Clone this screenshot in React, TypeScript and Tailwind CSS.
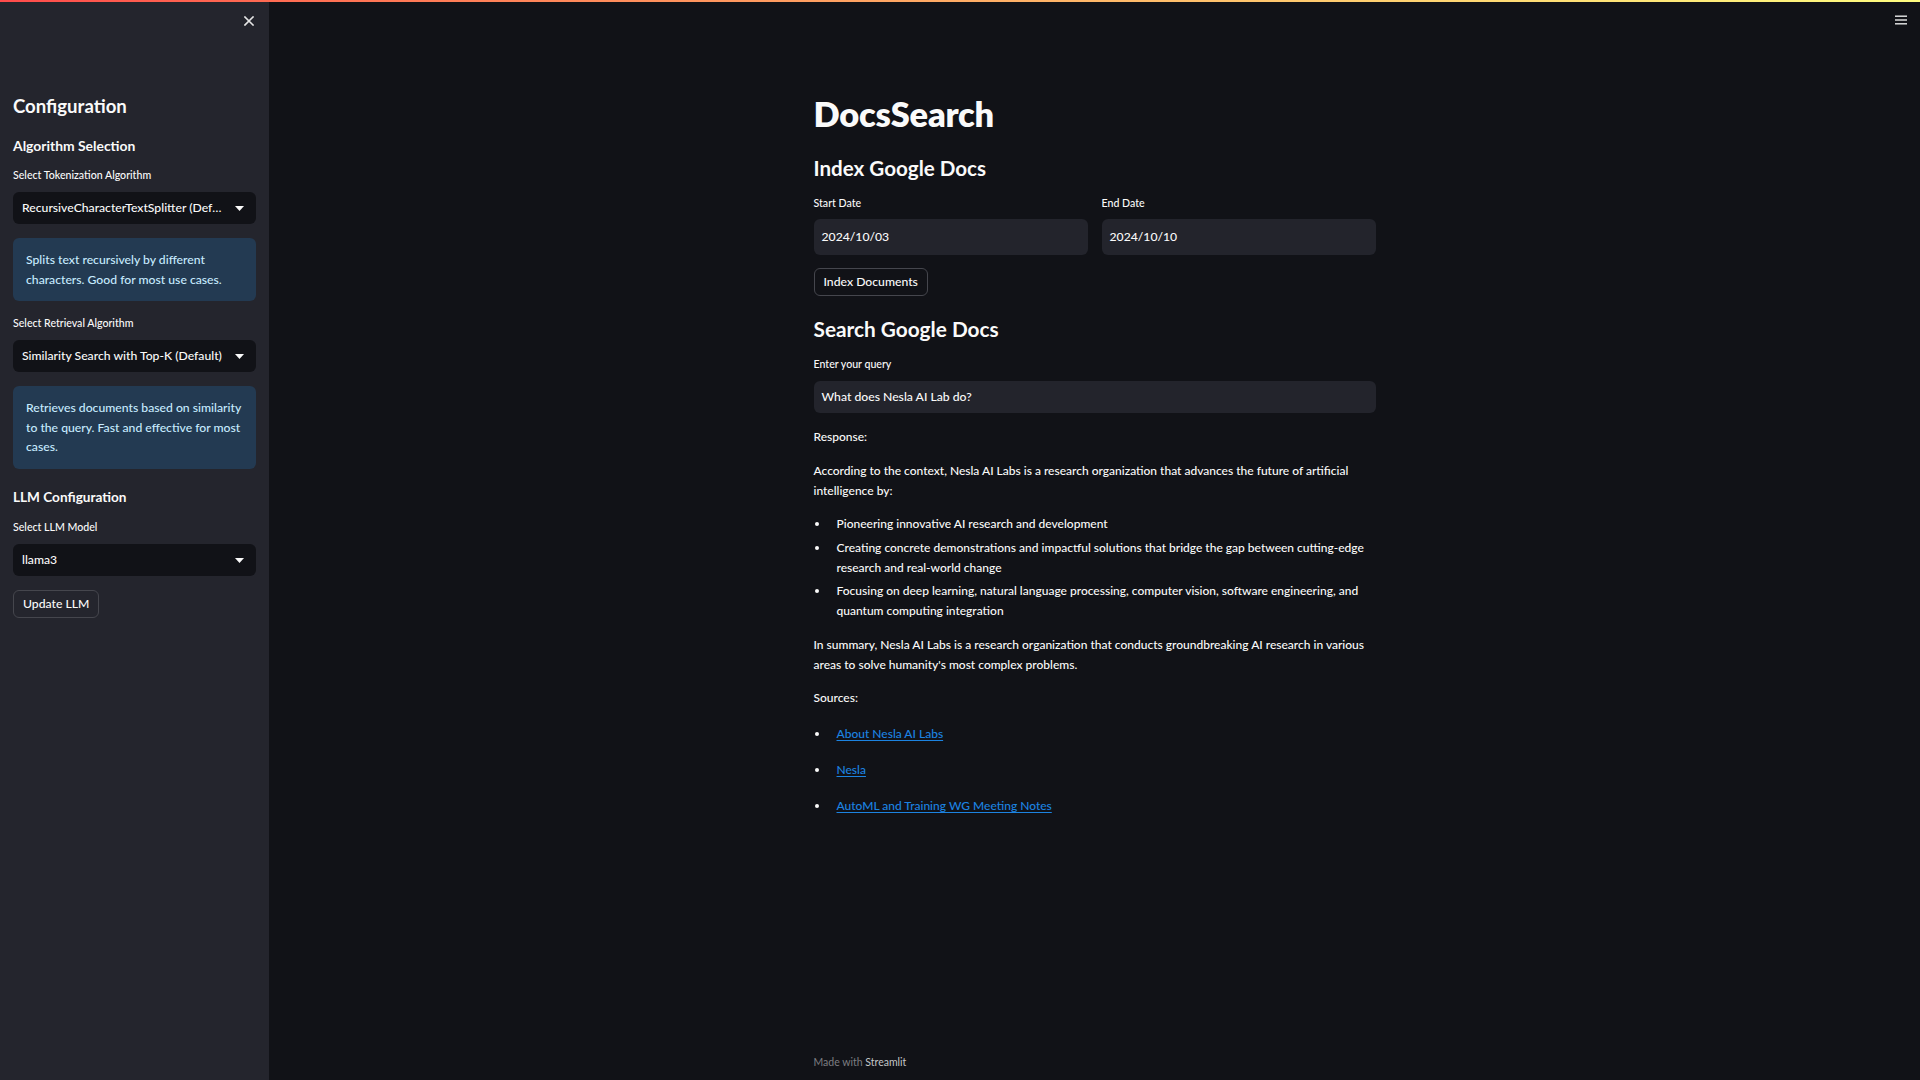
import React from "react";

const FONT = { fontFamily: "Lato, 'Noto Sans', sans-serif" };

function Chevron() {
  return (
    <svg width="9" height="5" viewBox="0 0 9 5" className="shrink-0">
      <path d="M0 0 L9 0 L4.5 5 Z" fill="#fafafa" />
    </svg>
  );
}

function SelectBox({ value }: { value: string }) {
  return (
    <div className="flex h-[32px] items-center rounded-[6px] bg-[#111217] pl-[9px] pr-[12px]">
      <span className="min-w-0 flex-1 truncate pr-[10px] text-[12.2px] font-medium text-[#fafafa]">{value}</span>
      <Chevron />
    </div>
  );
}

function Info({ children, h }: { children: React.ReactNode; h: string }) {
  return (
    <div className={`rounded-[6px] bg-[#233a52] px-[13px] py-[12px] text-[12.2px] font-medium leading-[19.5px] text-[#c7ebff] ${h}`}>
      {children}
    </div>
  );
}

function Label({ children }: { children: React.ReactNode }) {
  return <div className="h-[14px] text-[10.6px] font-medium leading-[14px] text-[#fafafa]">{children}</div>;
}

function Sidebar() {
  return (
    <aside className="relative flex h-full w-[269px] shrink-0 flex-col bg-[#24252d] px-[13px] pt-[94px]">
      <button className="absolute left-[244px] top-[16px] flex h-[10px] w-[10px] items-center justify-center">
        <svg width="10" height="10" viewBox="0 0 10 10">
          <path d="M1 1 L9 9 M9 1 L1 9" stroke="#e6e6e6" strokeWidth="1.6" strokeLinecap="square" />
        </svg>
      </button>
      <h2 className="h-[24px] text-[18.6px] font-bold leading-[24px] text-[#fafafa]">Configuration</h2>
      <h3 className="mt-[17.5px] h-[20px] text-[13.9px] font-bold leading-[20px] text-[#fafafa]">Algorithm Selection</h3>
      <div className="mt-[12.5px]">
        <Label>Select Tokenization Algorithm</Label>
      </div>
      <div className="mt-[10px]">
        <SelectBox value="RecursiveCharacterTextSplitter (Default)" />
      </div>
      <div className="mt-[14px]">
        <Info h="h-[63px]">Splits text recursively by different characters. Good for most use cases.</Info>
      </div>
      <div className="mt-[15px]">
        <Label>Select Retrieval Algorithm</Label>
      </div>
      <div className="mt-[10px]">
        <SelectBox value="Similarity Search with Top-K (Default)" />
      </div>
      <div className="mt-[14px]">
        <Info h="h-[82.5px]">Retrieves documents based on similarity to the query. Fast and effective for most cases.</Info>
      </div>
      <h3 className="mt-[18.5px] h-[20px] text-[13.6px] font-bold leading-[20px] text-[#fafafa]">LLM Configuration</h3>
      <div className="mt-[13px]">
        <Label>Select LLM Model</Label>
      </div>
      <div className="mt-[10px]">
        <SelectBox value="llama3" />
      </div>
      <div className="mt-[14px]">
        <button className="flex h-[28px] items-center rounded-[6px] border border-[#45464d] px-[9px] text-[12.2px] font-medium text-[#fafafa]">
          Update LLM
        </button>
      </div>
    </aside>
  );
}

function Bullet({ children, link }: { children: React.ReactNode; link?: boolean }) {
  return (
    <li className="flex">
      <span className="flex h-[20px] w-[23px] shrink-0 items-center">
        <span className="ml-[1px] h-[4px] w-[4px] rounded-full bg-[#fafafa]" />
      </span>
      <span className={link ? "text-[#1c83e1] underline underline-offset-[2px]" : ""}>{children}</span>
    </li>
  );
}

function Main() {
  return (
    <main className="flex h-full min-w-0 flex-1 flex-col items-center">
      <div className="flex w-[562px] flex-1 flex-col pt-[93px] text-[12px] font-medium leading-[20px] text-[#fafafa]">
        <h1 className="h-[42px] text-[34.4px] font-extrabold leading-[42px] tracking-[-0.2px]">DocsSearch</h1>
        <h3 className="mt-[21px] h-[24px] text-[20.6px] font-bold leading-[24px]">Index Google Docs</h3>
        <div className="mt-[16px] grid grid-cols-2 gap-[14px]">
          <Label>Start Date</Label>
          <Label>End Date</Label>
        </div>
        <div className="mt-[9px] grid grid-cols-2 gap-[14px]">
          <div className="flex h-[36px] items-center rounded-[6px] bg-[#23242c] px-[8px] text-[12.2px]">2024/10/03</div>
          <div className="flex h-[36px] items-center rounded-[6px] bg-[#23242c] px-[8px] text-[12.2px]">2024/10/10</div>
        </div>
        <div className="mt-[13px]">
          <button className="flex h-[28px] items-center rounded-[6px] border border-[#45464d] bg-[#111217] px-[9px] text-[12.2px] font-medium">
            Index Documents
          </button>
        </div>
        <h3 className="mt-[21px] h-[24px] text-[20.8px] font-bold leading-[24px]">Search Google Docs</h3>
        <div className="mt-[16px]">
          <Label>Enter your query</Label>
        </div>
        <div className="mt-[10px] flex h-[32px] items-center rounded-[6px] bg-[#23242c] px-[8px] text-[12.2px]">
          What does Nesla AI Lab do?
        </div>
        <p className="mt-[14px]">Response:</p>
        <p className="mt-[14px]">
          According to the context, Nesla AI Labs is a research organization that advances the future of artificial
          intelligence by:
        </p>
        <ul className="mt-[13px] flex flex-col gap-[3.5px]">
          <Bullet>Pioneering innovative AI research and development</Bullet>
          <Bullet>
            Creating concrete demonstrations and impactful solutions that bridge the gap between cutting-edge research and
            real-world change
          </Bullet>
          <Bullet>
            Focusing on deep learning, natural language processing, computer vision, software engineering, and quantum
            computing integration
          </Bullet>
        </ul>
        <p className="mt-[14px]">
          In summary, Nesla AI Labs is a research organization that conducts groundbreaking AI research in various areas to
          solve humanity's most complex problems.
        </p>
        <p className="mt-[13px]">Sources:</p>
        <ul className="mt-[16px] flex flex-col gap-[16px]">
          <Bullet link>About Nesla AI Labs</Bullet>
          <Bullet link>Nesla</Bullet>
          <Bullet link>AutoML and Training WG Meeting Notes</Bullet>
        </ul>
        <div className="mt-auto mb-[10px] h-[16px] text-[10.5px] font-normal leading-[16px] text-[#7d7e82]">
          Made with <span className="text-[#c4c5c7]">Streamlit</span>
        </div>
      </div>
    </main>
  );
}

export default function App() {
  return (
    <div className="relative flex h-[1080px] w-full overflow-hidden bg-[#111217]" style={FONT}>
      <div className="absolute left-0 right-0 top-0 z-10 h-[2px] bg-gradient-to-r from-[#ff4b4b] to-[#fffd80]" />
      <Sidebar />
      <Main />
      <button className="absolute right-[13px] top-[15px]">
        <svg width="12" height="10" viewBox="0 0 12 10">
          <rect x="0" y="0.5" width="12" height="1.4" fill="#e8e8e8" />
          <rect x="0" y="4.3" width="12" height="1.4" fill="#e8e8e8" />
          <rect x="0" y="8.1" width="12" height="1.4" fill="#e8e8e8" />
        </svg>
      </button>
    </div>
  );
}
